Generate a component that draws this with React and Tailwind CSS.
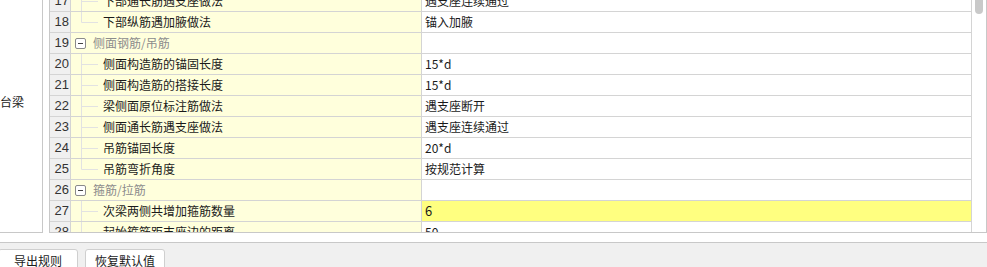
import React from 'react';

const rows = [
    { n: 17, t: '下部通长筋遇支座做法', v: '遇支座连续通过', kind: 'child' },
    { n: 18, t: '下部纵筋遇加腋做法', v: '锚入加腋', kind: 'last' },
    { n: 19, t: '侧面钢筋/吊筋', v: '', kind: 'group' },
    { n: 20, t: '侧面构造筋的锚固长度', v: '15*d', kind: 'child' },
    { n: 21, t: '侧面构造筋的搭接长度', v: '15*d', kind: 'child' },
    { n: 22, t: '梁侧面原位标注筋做法', v: '遇支座断开', kind: 'child' },
    { n: 23, t: '侧面通长筋遇支座做法', v: '遇支座连续通过', kind: 'child' },
    { n: 24, t: '吊筋锚固长度', v: '20*d', kind: 'child' },
    { n: 25, t: '吊筋弯折角度', v: '按规范计算', kind: 'last' },
    { n: 26, t: '箍筋/拉筋', v: '', kind: 'group' },
    { n: 27, t: '次梁两侧共增加箍筋数量', v: '6', kind: 'child', active: true },
    { n: 28, t: '起始箍筋距支座边的距离', v: '50', kind: 'child' },
];

const TreeLine = ({ last }) => (
    <svg width="22" height="20" className="shrink-0">
        <line x1="1.5" y1="0" x2="1.5" y2={last ? 10.5 : 20} stroke="#e2e2e2" strokeWidth="1" />
        <line x1="1.5" y1="10.5" x2="18" y2="10.5" stroke="#e2e2e2" strokeWidth="1" />
    </svg>
);

const Row = ({ row }) => {
    const isGroup = row.kind === 'group';
    return (
        <div className="flex h-[21px] border-b border-[#d4d4d4]">
            <div className="w-[21px] shrink-0 bg-[#f0f0f0] border-r border-[#d4d4d4] text-right pr-[1px] text-[13px] leading-[20px] text-[#333] font-['Liberation_Sans',sans-serif]">
                {row.n}
            </div>
            <div className="w-[351px] shrink-0 bg-[#ffffdc] border-r border-[#d4d4d4] flex items-center">
                {isGroup ? (
                    <div className="flex items-center h-full pl-[4px]">
                        <div className="relative w-[11px] h-[11px] flex items-center justify-center border border-[#8a8a8a] rounded-[2px] bg-white">
                            <div className="w-[5px] h-px bg-[#444]" />
                        </div>
                        <span className="ml-[7px] text-[12px] text-[#8c8c8c]">{row.t}</span>
                    </div>
                ) : (
                    <div className="flex items-center h-full pl-[9px]">
                        <TreeLine last={row.kind === 'last'} />
                        <span className="ml-px text-[12px] text-[#1a1a1a] whitespace-nowrap">{row.t}</span>
                    </div>
                )}
            </div>
            <div className={`flex-1 flex items-center pl-[3px] ${row.active ? 'bg-[#ffff80] text-[13px]' : 'bg-white text-[12px]'} text-[#1a1a1a]`}>
                {row.v}
            </div>
        </div>
    );
};

export default function App() {
    return (
        <div className="w-[987px] h-[267px] overflow-hidden bg-white flex flex-col font-['Noto_Sans_CJK_SC','Liberation_Sans',sans-serif]">
            <div className="flex h-[242px] shrink-0">
                <div className="w-[43px] h-[233px] shrink-0 border-r border-b border-[#c8c8c8] pt-[93px] text-[12px] text-[#1a1a1a]">
                    台梁
                </div>
                <div className="w-[6px] shrink-0" />
                <div className="w-[938px] h-[233px] shrink-0 flex border-x border-b border-[#c8c8c8] overflow-hidden">
                    <div className="flex-1 overflow-hidden">
                        <div className="-mt-[9px]">
                            {rows.map((row) => (
                                <Row key={row.n} row={row} />
                            ))}
                        </div>
                    </div>
                    <div className="w-[15px] shrink-0 border-l border-[#d4d4d4] bg-white flex justify-center">
                        <div className="w-[8px] h-[14px] rounded-b-[4px] bg-[#c9c9c9]" />
                    </div>
                </div>
            </div>
            <div className="flex-1 border-t border-[#c8c8c8] bg-[#f0f0f0] flex items-start gap-[7px] pt-[6px]">
                <button className="-ml-[2px] w-[80px] h-[30px] bg-white border border-[#cfcfcf] rounded-[3px] text-[12px] text-[#1a1a1a] pb-[6px]">
                    导出规则
                </button>
                <button className="w-[80px] h-[30px] bg-white border border-[#cfcfcf] rounded-[3px] text-[12px] text-[#1a1a1a] pb-[6px]">
                    恢复默认值
                </button>
            </div>
        </div>
    );
}
